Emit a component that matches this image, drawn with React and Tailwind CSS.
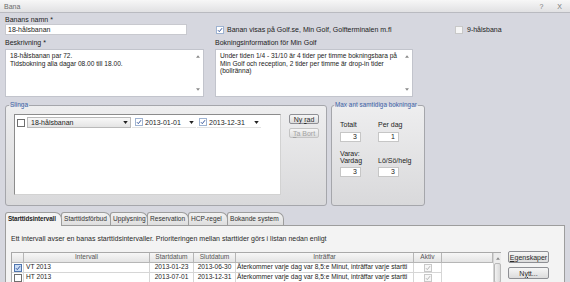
import React from 'react'

function Check({ checked = false, tone = 'normal' }) {
  const box =
    tone === 'disabled'
      ? 'border-[#c8c8c8] bg-[#f6f6f6]'
      : tone === 'blue'
      ? 'border-[#4f74ad] bg-[#c9dcf4]'
      : tone === 'soft'
      ? 'border-[#9fb3d1] bg-white'
      : 'border-[#6f6f6f] bg-white'
  return (
    <span className={`inline-flex shrink-0 items-center justify-center w-[8px] h-[8px] border ${box}`}>
      {checked && (
        <svg viewBox="0 0 8 8" className="w-[6px] h-[6px]">
          <path d="M1.3 4.3 L3.1 6.2 L6.7 1.6" fill="none" stroke={tone === 'disabled' ? '#b4b4b4' : '#34559a'} strokeWidth="1.3" />
        </svg>
      )}
    </span>
  )
}

function Arrow({ up = false }) {
  return (
    <svg viewBox="0 0 6 4" className="w-[5px] h-[3px]">
      <path d={up ? 'M0 4 L3 0 L6 4 Z' : 'M0 0 L6 0 L3 4 Z'} fill="#222" />
    </svg>
  )
}

function SmallArrow({ up = false }) {
  return (
    <svg viewBox="0 0 6 4" className="w-[4px] h-[3px]">
      <path d={up ? 'M0 4 L3 0 L6 4 Z' : 'M0 0 L6 0 L3 4 Z'} fill="#8a8a8a" />
    </svg>
  )
}

function TextArea({ lines, className = '' }) {
  return (
    <div className={`flex h-[48px] bg-white border border-[#c2c4cc] ${className}`}>
      <div className="flex-1 pl-[4px] pt-[2px] leading-[7.5px] text-[6.6px] text-[#1a1a1a] whitespace-nowrap">
        {lines.map((l) => (
          <div key={l}>{l}</div>
        ))}
      </div>
      <div className="w-[10px] flex flex-col items-center justify-between py-[5px]">
        <SmallArrow up />
        <SmallArrow />
      </div>
    </div>
  )
}

function Btn({ children, disabled = false, className = '' }) {
  return (
    <div
      className={`flex items-center justify-center rounded-[2px] border bg-gradient-to-b from-[#f6f6f6] to-[#dcdcdc] whitespace-nowrap ${
        disabled ? 'border-[#c4c4c4] text-[#a3a3a3]' : 'border-[#8e8f94] text-[#2a2a2a]'
      } ${className}`}
    >
      {children}
    </div>
  )
}

function NumBox({ value }) {
  return (
    <div className="w-[21px] h-[10px] bg-white border border-[#c6c6c6] text-right pr-[3px] leading-[8px] text-[#222]">{value}</div>
  )
}

function Tab({ label, active = false, className = '' }) {
  return (
    <div
      className={`relative h-[13px] flex items-center pl-[2px] pr-[2px] whitespace-nowrap border-t border-l border-r border-[#9d9d9d] rounded-tl-[3px] rounded-tr-[7px] ${
        active
          ? 'bg-[#f3f3f3] font-bold z-10 h-[14px] -mb-px text-[6.3px] tracking-[-0.1px]'
          : 'bg-gradient-to-b from-[#f2f2f2] to-[#dedede] text-[#333] text-[6.6px]'
      } ${className}`}
    >
      {label}
    </div>
  )
}

const cols = 'grid grid-cols-[12px_126px_44px_42px_178px_28px_51px]'

function Row({ name, from, to, selected }) {
  const cell = 'h-[10px] border-r border-b border-[#d6d6d6] bg-white flex items-center overflow-hidden whitespace-nowrap'
  return (
    <div className={`${cols} text-[6.6px]`}>
      <div className={`${cell} justify-center bg-[#f4f4f4] border-[#c0c0c0]`}>
        <Check checked={selected} tone={selected ? 'blue' : 'normal'} />
      </div>
      <div className={`${cell} pl-[2px]`}>{name}</div>
      <div className={`${cell} justify-center`}>{from}</div>
      <div className={`${cell} justify-center`}>{to}</div>
      <div className={`${cell} pl-[1px]`}>Återkommer varje dag var 8,5:e Minut, inträffar varje startti</div>
      <div className={`${cell} justify-center`}>
        <Check checked tone="disabled" />
      </div>
      <div className="h-[10px] bg-white" />
    </div>
  )
}

export default function App() {
  return (
    <div className="w-[570px] h-[282px] overflow-hidden bg-[#d6d7df] font-['Liberation_Sans',Arial,sans-serif] text-[7px] text-[#1c1c1c] leading-none">
      {/* title bar */}
      <div className="h-[13px] flex items-center justify-between px-[4px] bg-gradient-to-b from-[#f7f7f7] to-[#e1e1e3] border-b border-[#b9bac0]">
        <span className="text-[#6b6b6b] text-[7px]">Bana</span>
        <div className="flex items-center gap-[14px] pr-[4px] text-[#7a7a7a] text-[7px]">
          <span>?</span>
          <span>X</span>
        </div>
      </div>

      <div className="px-[5px]">
        {/* name row */}
        <div className="mt-[2px] leading-[9px] h-[9px]">Banans namn *</div>
        <div className="flex items-center h-[11px]">
          <div className="w-[182px] h-[11px] bg-white border border-[#c8c9cf] pl-[2px] flex items-center">18-hålsbanan</div>
          <div className="ml-[29px] w-[239px] flex items-center gap-[3px] whitespace-nowrap">
            <Check checked tone="soft" />
            <span>Banan visas på Golf.se, Min Golf, Golfterminalen m.fl</span>
          </div>
          <div className="flex items-center gap-[4px]">
            <Check tone="disabled" />
            <span>9-hålsbana</span>
          </div>
        </div>

        {/* descriptions */}
        <div className="mt-[3px] flex leading-[9px] h-[9px]">
          <span className="w-[210px]">Beskrivning *</span>
          <span>Bokningsinformation för Min Golf</span>
        </div>
        <div className="mt-[2px] flex gap-[11px]">
          <TextArea className="w-[199px]" lines={['18-hålsbanan par 72.', 'Tidsbokning alla dagar 08.00 till 18.00.']} />
          <TextArea
            className="w-[198px]"
            lines={[
              'Under tiden 1/4 - 31/10 är 4 tider per timme bokningsbara på',
              'Min Golf och reception, 2 tider per timme är drop-in tider',
              '(bollränna)',
            ]}
          />
        </div>

        {/* group boxes */}
        <div className="mt-[4px] flex gap-[4px] h-[105px]">
          <fieldset className="w-[322px] h-full border border-[#a5a6ab] rounded-[3px] bg-gradient-to-b from-[#eeeeef] to-[#d9d9db] px-0">
            <legend className="ml-[3px] px-[1px] text-[#3b63a6] leading-[8px] text-[6.5px]">Slinga</legend>
            <div className="flex gap-[8px] ml-[8px] mt-[5px]">
              <div className="w-[267px] h-[81px] bg-white border border-[#8c8c8c] border-r-[#d2d2d2] border-b-[#d2d2d2] p-[2px]">
                <div className="flex items-center h-[11px] whitespace-nowrap">
                  <Check />
                  <div className="ml-[2px] w-[104px] h-[11px] flex items-center justify-between pl-[3px] pr-[2px] border border-[#b9b9b9] bg-gradient-to-b from-[#f8f8f8] to-[#e4e4e4]">
                    <span>18-hålsbanan</span>
                    <Arrow />
                  </div>
                  <div className="ml-[1px] w-[64px] h-[11px] flex items-center pl-[3px] pr-[2px] border-b border-[#e2e2e2]">
                    <Check checked tone="soft" />
                    <span className="ml-[2px]">2013-01-01</span>
                    <span className="ml-auto"><Arrow /></span>
                  </div>
                  <div className="ml-[1px] w-[64px] h-[11px] flex items-center pl-[2px] pr-[2px] border-b border-[#e2e2e2]">
                    <Check checked tone="soft" />
                    <span className="ml-[2px]">2013-12-31</span>
                    <span className="ml-auto"><Arrow /></span>
                  </div>
                </div>
              </div>
              <div className="flex flex-col gap-[4px]">
                <Btn className="w-[30px] h-[10px]">
                  <span>Ny <span className="underline">r</span>ad</span>
                </Btn>
                <Btn disabled className="w-[30px] h-[10px]">
                  <span><span className="underline">T</span>a Bort</span>
                </Btn>
              </div>
            </div>
          </fieldset>

          <fieldset className="w-[94px] h-full border border-[#a5a6ab] rounded-[3px] bg-gradient-to-b from-[#eeeeef] to-[#d9d9db] px-0">
            <legend className="ml-[2px] px-[1px] text-[#3b63a6] leading-[8px] text-[6.3px] tracking-[0.05px] whitespace-nowrap">Max ant samtidiga bokningar</legend>
            <div className="grid grid-cols-[38px_30px] ml-[8px] mt-[12px]">
              <div className="leading-[8px]">Totalt</div>
              <div className="leading-[8px]">Per dag</div>
              <div className="mt-[3px]"><NumBox value="3" /></div>
              <div className="mt-[3px]"><NumBox value="1" /></div>
              <div className="mt-[8px] leading-[7px]">
                <div>Varav:</div>
                <div>Vardag</div>
              </div>
              <div className="mt-[8px] leading-[7px] flex items-end whitespace-nowrap">Lö/Sö/helg</div>
              <div className="mt-[3px]"><NumBox value="3" /></div>
              <div className="mt-[3px]"><NumBox value="3" /></div>
            </div>
          </fieldset>
        </div>

        {/* tabs */}
        <div className="mt-[6px] flex items-end">
          <Tab label="Starttidsintervall" active className="w-[57px]" />
          <Tab label="Starttidsförbud" className="w-[50px] -ml-[1px]" />
          <Tab label="Upplysning" className="w-[38px] -ml-[1px]" />
          <Tab label="Reservation" className="w-[42px] -ml-[1px]" />
          <Tab label="HCP-regel" className="w-[40px] -ml-[1px]" />
          <Tab label="Bokande system" className="w-[57px] -ml-[1px]" />
        </div>

        {/* tab panel */}
        <div className="w-[560px] h-[60px] bg-[#f3f3f3] border border-[#9d9d9d] px-[5px] pt-[9px]">
          <div className="leading-[7px] text-[#2a2a2a] whitespace-nowrap">
            Ett intervall avser en banas starttidsintervaller. Prioriteringen mellan starttider görs i listan nedan enligt
          </div>
          <div className="mt-[10px] flex">
            <div className="w-[490px] flex border border-[#a9a9a9]">
              <div className="flex-1">
                <div className={`${cols} text-[#555] text-[6.6px] bg-gradient-to-b from-[#f7f7f7] to-[#e2e2e2]`}>
                  {['', 'Intervall', 'Startdatum', 'Slutdatum', 'Inträffar', 'Aktiv', ''].map((h, i) => (
                    <div key={i} className="h-[10px] flex items-center justify-center border-r border-b border-[#b6b6b6]">
                      {h}
                    </div>
                  ))}
                </div>
                <Row name="VT 2013" from="2013-01-23" to="2013-06-30" selected />
                <Row name="HT 2013" from="2013-07-01" to="2013-12-31" />
              </div>
              <div className="w-[9px] bg-[#ececec] border-l border-[#d4d4d4] flex flex-col items-center">
                <div className="h-[10px] flex items-center">
                  <SmallArrow up />
                </div>
                <div className="w-[7px] flex-1 rounded-[2px] border border-[#b8b8b8] bg-gradient-to-r from-[#f2f2f2] to-[#dadada]" />
              </div>
            </div>
            <div className="ml-[7px] flex flex-col gap-[4px] -mt-[1px]">
              <Btn className="w-[41px] h-[12px]">
                <span><span className="underline">E</span>genskaper</span>
              </Btn>
              <Btn className="w-[41px] h-[12px]">
                <span>N<span className="underline">y</span>tt...</span>
              </Btn>
            </div>
          </div>
        </div>
      </div>
    </div>
  )
}
